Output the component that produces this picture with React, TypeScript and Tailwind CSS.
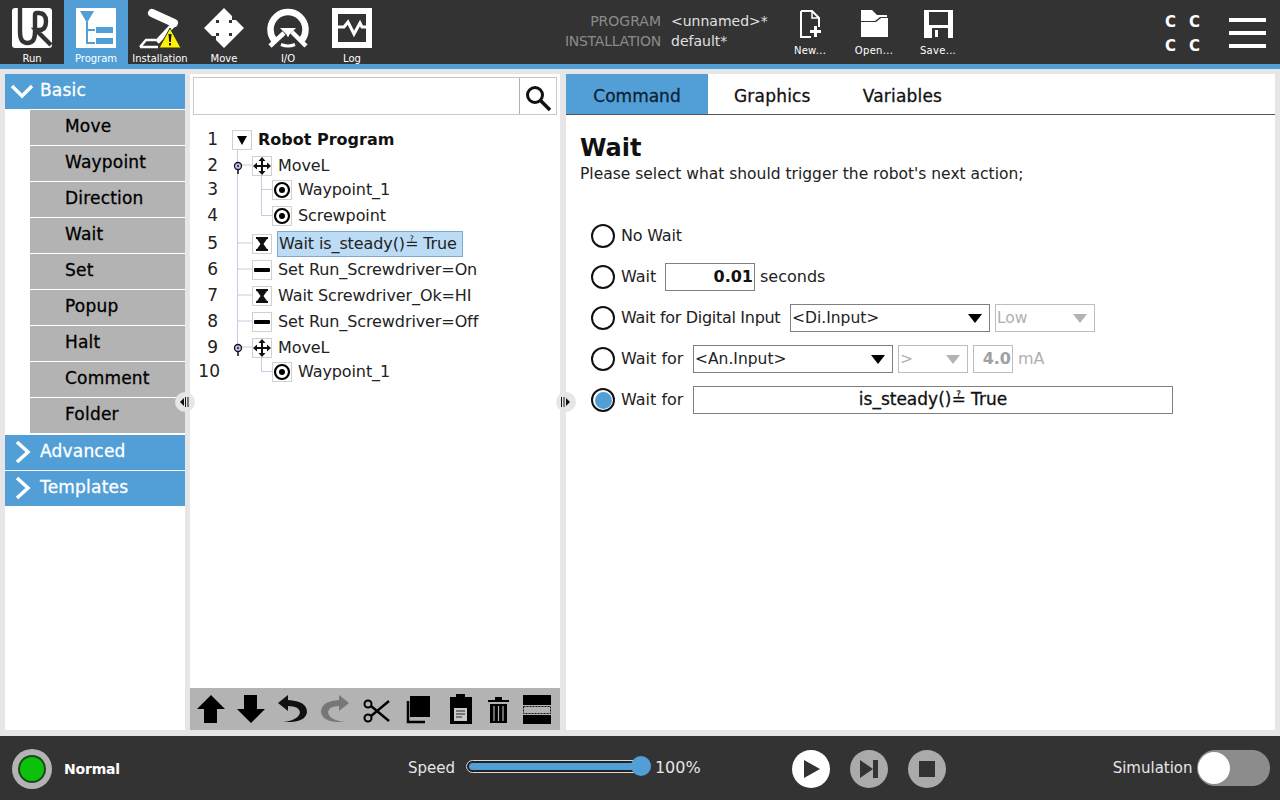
import React from "react";

const Blue = "#529fd7";

function RunIcon() {
  return (
    <svg width="40" height="40" viewBox="0 0 40 40">
      <rect width="40" height="40" rx="3" fill="#fff" />
      <path d="M8 0V24Q8 35 15.500 35Q23 35 23 24V7Q23 5 25 5H27Q34 5 34 13.500Q34 22 27 22H24L39 37" fill="none" stroke="#333" strokeWidth="4.400" />
    </svg>
  );
}
function ProgramIcon() {
  return (
    <svg width="40" height="40" viewBox="0 0 40 40">
      <rect width="40" height="40" fill="#fff" />
      <path d="M4 3H18L11 15Z" fill={Blue} />
      <path d="M11 14V35H19M11 22H19" fill="none" stroke={Blue} strokeWidth="2" />
      <rect x="20" y="19" width="17" height="6" fill={Blue} />
      <rect x="20" y="30" width="17" height="6" fill={Blue} />
    </svg>
  );
}
function InstallIcon() {
  return (
    <svg width="44" height="42" viewBox="0 0 44 42">
      <path d="M14 5L36 15" stroke="#fff" strokeWidth="8" strokeLinecap="round" />
      <path d="M35 17L19 34" stroke="#fff" strokeWidth="5" />
      <path d="M2 39L8 32H18M2 39H20" fill="none" stroke="#fff" strokeWidth="2.500" />
      <path d="M32 20L43 40H21Z" fill="#fff200" stroke="#333" strokeWidth="1" />
      <path d="M30.500 26H33.500L32.800 34H31.200Z" fill="#111" />
      <rect x="31" y="35" width="2" height="2.400" fill="#111" />
    </svg>
  );
}
function MoveIcon() {
  return (
    <svg width="40" height="40" viewBox="0 0 40 40">
      <path d="M20 0L32 12H8ZM20 40L32 28H8ZM0 20L12 8V32ZM40 20L28 8V32Z" fill="#fff" />
      <rect x="15" y="8" width="10" height="24" fill="#fff" />
      <rect x="8" y="15" width="24" height="10" fill="#fff" />
    </svg>
  );
}
function TreeMove() {
  return (
    <svg width="18" height="18" viewBox="0 0 18 18">
      <path d="M9 3V15M3 9H15" stroke="#111" strokeWidth="2" />
      <path d="M9 0L12.500 4H5.500ZM9 18L12.500 14H5.500ZM0 9L4 5.500V12.500ZM18 9L14 5.500V12.500Z" fill="#111" />
    </svg>
  );
}
function IOIcon() {
  return (
    <svg width="42" height="42" viewBox="0 0 42 42">
      <path d="M7 32A17.500 17.500 0 1 1 35 32" fill="none" stroke="#fff" strokeWidth="6.500" />
      <path d="M14 36.500A18 18 0 0 0 28 36.500" fill="none" stroke="#fff" strokeWidth="3" />
      <path d="M3 38L17 25M39 38L25 24" stroke="#fff" strokeWidth="4.500" />
      <path d="M13 20H22V29Z" fill="#fff" />
      <path d="M20 29V20H29Z" fill="#fff" />
    </svg>
  );
}
function LogIcon() {
  return (
    <svg width="40" height="40" viewBox="0 0 40 40">
      <rect width="40" height="40" fill="#fff" />
      <rect x="6" y="6" width="28" height="28" fill="#333" />
      <path d="M6 19H12L16 14L22 26L28 15L30 19H34" fill="none" stroke="#fff" strokeWidth="3" />
    </svg>
  );
}
function NewIcon() {
  return (
    <svg width="22" height="28" viewBox="0 0 22 28">
      <path d="M2 1H13L20 8V17M12 27H2V1" fill="none" stroke="#fff" strokeWidth="2" />
      <path d="M13 1V8H20" fill="none" stroke="#fff" strokeWidth="1.500" />
      <path d="M15 16H18V20H22V23H18V27H15V23H11V20H15Z" fill="#fff" />
    </svg>
  );
}
function OpenIcon() {
  return (
    <svg width="29" height="28" viewBox="0 0 29 28">
      <path d="M1 0H12L17 5H27V7H20L15 11H1Z" fill="#fff" />
      <path d="M1 12H16L21 8H28V27H1Z" fill="#fff" />
    </svg>
  );
}
function SaveIcon() {
  return (
    <svg width="29" height="28" viewBox="0 0 29 28">
      <path d="M0 0H29V28H0Z" fill="#fff" />
      <rect x="5" y="2" width="19" height="13" fill="#333" />
      <rect x="8" y="18" width="16" height="10" fill="#333" />
      <rect x="11" y="20" width="3" height="7" fill="#fff" />
    </svg>
  );
}
function SearchIcon() {
  return (
    <svg width="28" height="28" viewBox="0 0 28 28">
      <circle cx="11" cy="11" r="7.500" fill="none" stroke="#111" strokeWidth="3" />
      <path d="M16.500 16.500L26 26" stroke="#111" strokeWidth="3.500" />
    </svg>
  );
}
function Chevron({ down }: { down?: boolean }) {
  return (
    <svg width="24" height="24" viewBox="0 0 24 24">
      {down ? (
        <path d="M2 7L12 17L22 7" fill="none" stroke="#fff" strokeWidth="3.500" />
      ) : (
        <path d="M7 2L18 12L7 22" fill="none" stroke="#fff" strokeWidth="3.500" />
      )}
    </svg>
  );
}
function NodeGlyph({ kind }: { kind: string }) {
  return (
    <div className="flex h-5 w-5 items-center justify-center border border-[#d0d0d0] bg-white">
      {kind === "root" && (
        <svg width="10" height="10" viewBox="0 0 10 10"><path d="M0 1H10L5 10Z" fill="#000" /></svg>
      )}
      {kind === "move" && <TreeMove />}
      {kind === "wp" && (
        <svg width="18" height="18" viewBox="0 0 18 18">
          <circle cx="9" cy="9" r="7" fill="none" stroke="#000" strokeWidth="2.200" />
          <circle cx="9" cy="9" r="3" fill="#000" />
        </svg>
      )}
      {kind === "wait" && (
        <svg width="12" height="14" viewBox="0 0 12 14">
          <path d="M0 0H12V2H11L7.500 7L11 12H12V14H0V12H1L4.500 7L1 2H0Z" fill="#111" />
        </svg>
      )}
      {kind === "set" && <div className="h-1 w-4 rounded-[1px] bg-black" />}
    </div>
  );
}

const tree = [
  { n: "1", h: 26, ind: 0, kind: "root", text: "Robot Program" },
  { n: "2", h: 26, ind: 1, kind: "move", text: "MoveL" },
  { n: "3", h: 22, ind: 2, kind: "wp", text: "Waypoint_1" },
  { n: "4", h: 30, ind: 2, kind: "wp", text: "Screwpoint" },
  { n: "5", h: 26, ind: 1, kind: "wait", text: "sel" },
  { n: "6", h: 26, ind: 1, kind: "set", text: "Set Run_Screwdriver=On" },
  { n: "7", h: 26, ind: 1, kind: "wait", text: "Wait Screwdriver_Ok=HI" },
  { n: "8", h: 26, ind: 1, kind: "set", text: "Set Run_Screwdriver=Off" },
  { n: "9", h: 26, ind: 1, kind: "move", text: "MoveL" },
  { n: "10", h: 22, ind: 2, kind: "wp", text: "Waypoint_1" },
];

function TreeLines() {
  return (
    <svg className="absolute left-0 top-0" width="120" height="300" viewBox="0 0 120 300">
      <g stroke="#c9c9e4" strokeWidth="1" fill="none">
        <path d="M47.500 35V232M48 50H62M48 128H62M48 154H62M48 180H62M48 206H62M48 232H62" />
        <path d="M71.500 60V100.500H82M71.500 74.500H82M71.500 242V256.500H82" />
      </g>
    </svg>
  );
}

function Dot() {
  return (
    <svg width="10" height="14" viewBox="0 0 10 14">
      <circle cx="5" cy="5" r="3.500" fill="#c7c7f0" stroke="#111" strokeWidth="1.300" />
      <circle cx="5" cy="5" r="1.200" fill="#3a3a90" />
      <path d="M5 9V13" stroke="#111" strokeWidth="1.500" />
    </svg>
  );
}

function Toolbar() {
  return (
    <div className="flex h-[42px] shrink-0 items-center bg-[#b3b3b3] pl-[5px]">
      <svg width="360" height="34" viewBox="0 0 360 34">
        <path d="M2 17L16 3L30 17H22V31H9V17Z" fill="#000" />
        <path d="M42 17L56 31L70 17H62V3H49V17Z" fill="#000" />
        <path d="M83 11L93 3V8Q112 9 112 20Q111 31 88 30Q104 28 105 20Q104 14 93 14V19Z" fill="#111" />
        <path d="M154 11L144 3V8Q126 9 126 20Q127 31 150 30Q134 28 133 20Q134 14 144 14V19Z" fill="#777" />
        <g fill="none" stroke="#000">
          <circle cx="173" cy="12" r="3.500" strokeWidth="2" />
          <circle cx="173" cy="26" r="3.500" strokeWidth="2" />
          <path d="M176 14L194 29M176 24L194 9" strokeWidth="2.400" />
        </g>
        <rect x="215" y="4" width="20" height="21" fill="#000" />
        <path d="M213 9V30H230" fill="none" stroke="#000" strokeWidth="2.500" />
        <path d="M255 5H261V2H270V5H277V32H255Z" fill="#000" />
        <rect x="259" y="16" width="13" height="13" fill="#c8c8c8" />
        <path d="M261 19H270M261 22H270M261 25H267" stroke="#222" strokeWidth="1" />
        <path d="M293 8H314V10H293ZM300 5H307V8H300Z" fill="#000" />
        <path d="M295 12H312V31H295Z" fill="#000" />
        <path d="M299 14V29M303.500 14V29M308 14V29" stroke="#b3b3b3" strokeWidth="1.200" />
        <rect x="328" y="3" width="28" height="10" fill="#000" />
        <rect x="328" y="23" width="28" height="9" fill="#000" />
        <rect x="328.500" y="14.500" width="27" height="7" fill="none" stroke="#111" strokeDasharray="2 1" />
      </svg>
    </div>
  );
}

function Radio({ on }: { on?: boolean }) {
  return (
    <div className="flex h-6 w-6 shrink-0 items-center justify-center rounded-full border-[2.5px] border-[#111] bg-white">
      {on && <div className="h-[17px] w-[17px] rounded-full bg-[#529fd7]" />}
    </div>
  );
}
function Select({ w, text, dis }: { w: string; text: string; dis?: boolean }) {
  return (
    <div className={`flex h-7 items-center justify-between border bg-white pl-px pr-[6px] text-[15.5px] ${w} ${dis ? "border-[#bdbdbd] text-[#b0b0b0]" : "border-[#808080] text-[#222]"}`}>
      <span className="pt-[2px]">{text}</span>
      <svg width="16" height="9" viewBox="0 0 16 9"><path d="M1 0H15L8 9Z" fill={dis ? "#b3b3b3" : "#000"} /></svg>
    </div>
  );
}

export default function App() {
  const nav = [
    { l: "Run", i: <RunIcon /> },
    { l: "Program", i: <ProgramIcon />, on: true },
    { l: "Installation", i: <InstallIcon /> },
    { l: "Move", i: <MoveIcon /> },
    { l: "I/O", i: <IOIcon /> },
    { l: "Log", i: <LogIcon /> },
  ];
  const basics = ["Move", "Waypoint", "Direction", "Wait", "Set", "Popup", "Halt", "Comment", "Folder"];
  return (
    <div className="flex h-[800px] w-[1280px] flex-col overflow-hidden bg-[#e6e6e6] font-['DejaVu_Sans',sans-serif]">
      <header className="flex h-[64px] shrink-0 bg-[#333333] text-white">
        {nav.map((n) => (
          <div key={n.l} className={`flex w-16 shrink-0 flex-col items-center ${n.on ? "bg-[#529fd7]" : ""}`}>
            <div className="flex h-[53px] items-start justify-center pt-2">{n.i}</div>
            <div className="whitespace-nowrap text-[10px] leading-[11px]">{n.l}</div>
          </div>
        ))}
        <div className="ml-[148px] flex w-[246px] shrink-0 flex-col pt-[11px] text-[14px] leading-5">
          <div className="flex gap-[10px]">
            <span className="w-[129px] text-right text-[#8b8b8b]">PROGRAM</span>
            <span className="text-[#e0e0e0]">&lt;unnamed&gt;*</span>
          </div>
          <div className="flex gap-[10px]">
            <span className="w-[129px] text-right tracking-[-0.25px] text-[#8b8b8b]">INSTALLATION</span>
            <span className="text-[#e0e0e0]">default*</span>
          </div>
        </div>
        {[
          { l: "New...", i: <NewIcon /> },
          { l: "Open...", i: <OpenIcon /> },
          { l: "Save...", i: <SaveIcon /> },
        ].map((n) => (
          <div key={n.l} className="flex w-16 shrink-0 flex-col items-center">
            <div className="flex h-[45px] items-start pt-[10px]">{n.i}</div>
            <div className="text-[10px] leading-3 tracking-[0.3px]">{n.l}</div>
          </div>
        ))}
        <div className="ml-[195px] grid shrink-0 grid-cols-2 content-start gap-x-[12px] gap-y-[4px] pt-[12px] text-[15px] font-bold leading-5">
          <span className="w-3">C</span><span className="w-3">C</span>
          <span className="w-3">C</span><span className="w-3">C</span>
        </div>
        <div className="ml-[28px] flex w-[37px] shrink-0 flex-col gap-[9px] pt-[18px]">
          <div className="h-1 bg-white" /><div className="h-1 bg-white" /><div className="h-1 bg-white" />
        </div>
      </header>
      <div className="h-[5px] shrink-0 bg-[#529fd7]" />

      <main className="relative flex h-[666px] shrink-0 gap-[5px] px-[5px] py-[5px]">
        {/* left */}
        <aside className="flex w-[180px] shrink-0 flex-col bg-white text-[17px] tracking-[0.2px] [-webkit-text-stroke:0.3px]">
          <div className="mb-px flex h-[35px] items-center bg-[#529fd7] pb-[2px] pl-[5px] text-white">
            <Chevron down /><span className="ml-[6px]">Basic</span>
          </div>
          <div className="flex flex-col gap-px pl-[25px]">
            {basics.map((b) => (
              <div key={b} className="flex h-[35px] items-center bg-[#b3b3b3] pb-[2px] pl-[35px] text-black">{b}</div>
            ))}
          </div>
          {["Advanced", "Templates"].map((t, i) => (
            <div key={t} className={`flex h-[35px] items-center bg-[#529fd7] pb-[2px] pl-[5px] text-white ${i === 0 ? "mt-[2px] mb-px" : ""}`}>
              <Chevron /><span className="ml-[6px]">{t}</span>
            </div>
          ))}
        </aside>

        {/* middle */}
        <section className="flex w-[370px] shrink-0 flex-col bg-white">
          <div className="mx-[3px] mt-[3px] flex h-[38px] shrink-0 justify-end border border-[#c8c8c8] bg-white">
            <div className="flex w-[37px] items-center justify-center border-l border-[#b0b0b0] pt-[3px]"><SearchIcon /></div>
          </div>
          <div className="relative flex-1 pt-[12px] text-[16px] tracking-[-0.1px] text-[#222]">
            <TreeLines />
            {tree.map((r) => (
              <div key={r.n} className="relative flex items-center" style={{ height: r.h }}>
                <div className={`shrink-0 text-right text-[17px] tracking-normal ${r.n === "10" ? "w-[30px]" : "w-[28px]"}`}>{r.n}</div>
                <div className="flex items-center">
                  {r.ind === 0 && <div className="ml-[14px] mr-[6px]"><NodeGlyph kind={r.kind} /></div>}
                  {r.ind === 1 && (
                    <>
                      <div className="ml-[15px] flex w-[10px] justify-center pt-[3px]">
                        {r.kind === "move" && <Dot />}
                      </div>
                      <div className="ml-[9px] mr-[6px]"><NodeGlyph kind={r.kind} /></div>
                    </>
                  )}
                  {r.ind === 2 && <div className={`mr-[6px] ${r.n === "10" ? "ml-[52px]" : "ml-[54px]"}`}><NodeGlyph kind={r.kind} /></div>}
                  {r.text === "sel" ? (
                    <div className="-ml-px flex h-[26px] w-[186px] items-center whitespace-nowrap border border-[#7fa9cf] bg-[#bcdcf5] pl-px">Wait is_steady()≟ True</div>
                  ) : r.kind === "root" ? (
                    <span className="whitespace-nowrap text-[16px] font-bold tracking-normal text-[#111]">{r.text}</span>
                  ) : (
                    <span className="whitespace-nowrap">{r.text}</span>
                  )}
                </div>
              </div>
            ))}
          </div>
          <Toolbar />
        </section>

        {/* right */}
        <section className="ml-px flex min-w-0 flex-1 flex-col bg-white text-[#222]">
          <div className="flex h-[41px] shrink-0 items-stretch border-b border-[#555] text-[17px] [-webkit-text-stroke:0.3px]">
            <div className="flex w-[142px] items-center justify-center bg-[#529fd7] pt-[6px] text-[#0d2233]">Command</div>
            <div className="ml-[26px] flex items-center pt-[6px] tracking-[0.2px] text-[#111]">Graphics</div>
            <div className="ml-[52px] flex items-center pt-[6px] tracking-[0.2px] text-[#111]">Variables</div>
          </div>
          <div className="px-[14px] pt-[18px]">
            <div className="text-[24px] font-bold leading-[30px] text-[#111]">Wait</div>
            <div className="mt-px text-[15.5px] leading-5">Please select what should trigger the robot's next action;</div>
            <div className="mt-[38px] flex flex-col gap-[13px] pl-[11px] text-[16px]">
              <div className="flex h-7 items-center gap-[6px]">
                <Radio /><span className="tracking-[-0.2px]">No Wait</span>
              </div>
              <div className="flex h-7 items-center">
                <Radio /><span className="ml-[6px] w-[44px]">Wait</span>
                <div className="flex h-7 w-[90px] items-center justify-end border border-[#808080] pr-px text-[16px] font-bold text-[#111]">0.01</div>
                <span className="ml-[5px]">seconds</span>
              </div>
              <div className="flex h-7 items-center">
                <Radio /><span className="ml-[6px] w-[169px] whitespace-nowrap tracking-[-0.3px]">Wait for Digital Input</span>
                <Select w="w-[200px]" text="<Di.Input>" />
                <div className="ml-[5px]"><Select w="w-[100px]" text="Low" dis /></div>
              </div>
              <div className="flex h-7 items-center">
                <Radio /><span className="ml-[6px] w-[72px]">Wait for</span>
                <Select w="w-[200px]" text="<An.Input>" />
                <div className="ml-[5px]"><Select w="w-[70px]" text=">" dis /></div>
                <div className="ml-[5px] flex h-7 w-10 items-center justify-end border border-[#bdbdbd] pr-px text-[16px] font-bold text-[#a0a0a0]">4.0</div>
                <span className="ml-[5px] text-[#b0b0b0]">mA</span>
              </div>
              <div className="flex h-7 items-center">
                <Radio on /><span className="ml-[6px] w-[72px]">Wait for</span>
                <div className="flex h-7 w-[480px] items-center justify-center border border-[#808080] text-[17px] text-[#111] [-webkit-text-stroke:0.3px]">is_steady()≟ True</div>
              </div>
            </div>
          </div>
        </section>

        {/* splitter handles */}
        <div className="absolute left-[175px] top-[323px] flex h-5 w-5 items-center justify-center rounded-full bg-[#e6e6e6]">
          <svg width="10" height="10" viewBox="0 0 10 10"><path d="M4 1V9L0 5Z" fill="#111" /><path d="M5.500 0V10M8 0V10" stroke="#111" /></svg>
        </div>
        <div className="absolute left-[556px] top-[323px] flex h-5 w-5 items-center justify-center rounded-full bg-[#e6e6e6]">
          <svg width="10" height="10" viewBox="0 0 10 10"><path d="M0.500 0V10M3 0V10" stroke="#111" /><path d="M5 1V9L9 5Z" fill="#111" /></svg>
        </div>
      </main>

      <footer className="mt-px flex h-16 shrink-0 items-center bg-[#333333] pt-[2px] text-white">
        <div className="ml-3 flex h-10 w-10 items-center justify-center rounded-full bg-[#b3b3b3]">
          <div className="flex h-7 w-7 items-center justify-center rounded-full bg-[#1a4a1a]">
            <div className="h-6 w-6 rounded-full bg-[#0cc20c]" />
          </div>
        </div>
        <span className="ml-3 text-[14px] font-bold tracking-[-0.2px]">Normal</span>
        <span className="ml-[288px] -translate-y-px text-[15px] text-[#e6e6e6]">Speed</span>
        <div className="relative ml-[11px] h-[13px] w-[176px] -translate-y-[3px] rounded-full border border-[#d8d8d8] bg-[#222] p-[2px]">
          <div className="h-full w-full rounded-full bg-[#529fd7]" />
          <div className="absolute right-[-10px] top-[-5px] h-5 w-5 rounded-full bg-[#529fd7]" />
        </div>
        <span className="ml-[13px] -translate-y-px text-[16px] text-[#e6e6e6]">100%</span>
        <div className="ml-[91px] flex gap-5">
          <div className="flex h-[38px] w-[38px] items-center justify-center rounded-full bg-white pl-[3px]">
            <svg width="16" height="18" viewBox="0 0 16 18"><path d="M0 0L16 9L0 18Z" fill="#333" /></svg>
          </div>
          <div className="flex h-[38px] w-[38px] items-center justify-center rounded-full bg-[#aaaaaa]">
            <svg width="18" height="18" viewBox="0 0 18 18"><path d="M0 0L13 9L0 18Z" fill="#333" /><rect x="13" y="0" width="5" height="18" fill="#333" /></svg>
          </div>
          <div className="flex h-[38px] w-[38px] items-center justify-center rounded-full bg-[#aaaaaa]">
            <div className="h-4 w-4 bg-[#333]" />
          </div>
        </div>
        <span className="ml-[167px] -translate-y-px text-[15px] text-[#e6e6e6]">Simulation</span>
        <div className="ml-1 flex h-9 w-[73px] -translate-y-px items-center rounded-full bg-[#8c8c8c] pl-[1px]">
          <div className="h-8 w-8 rounded-full bg-white" />
        </div>
      </footer>
    </div>
  );
}
